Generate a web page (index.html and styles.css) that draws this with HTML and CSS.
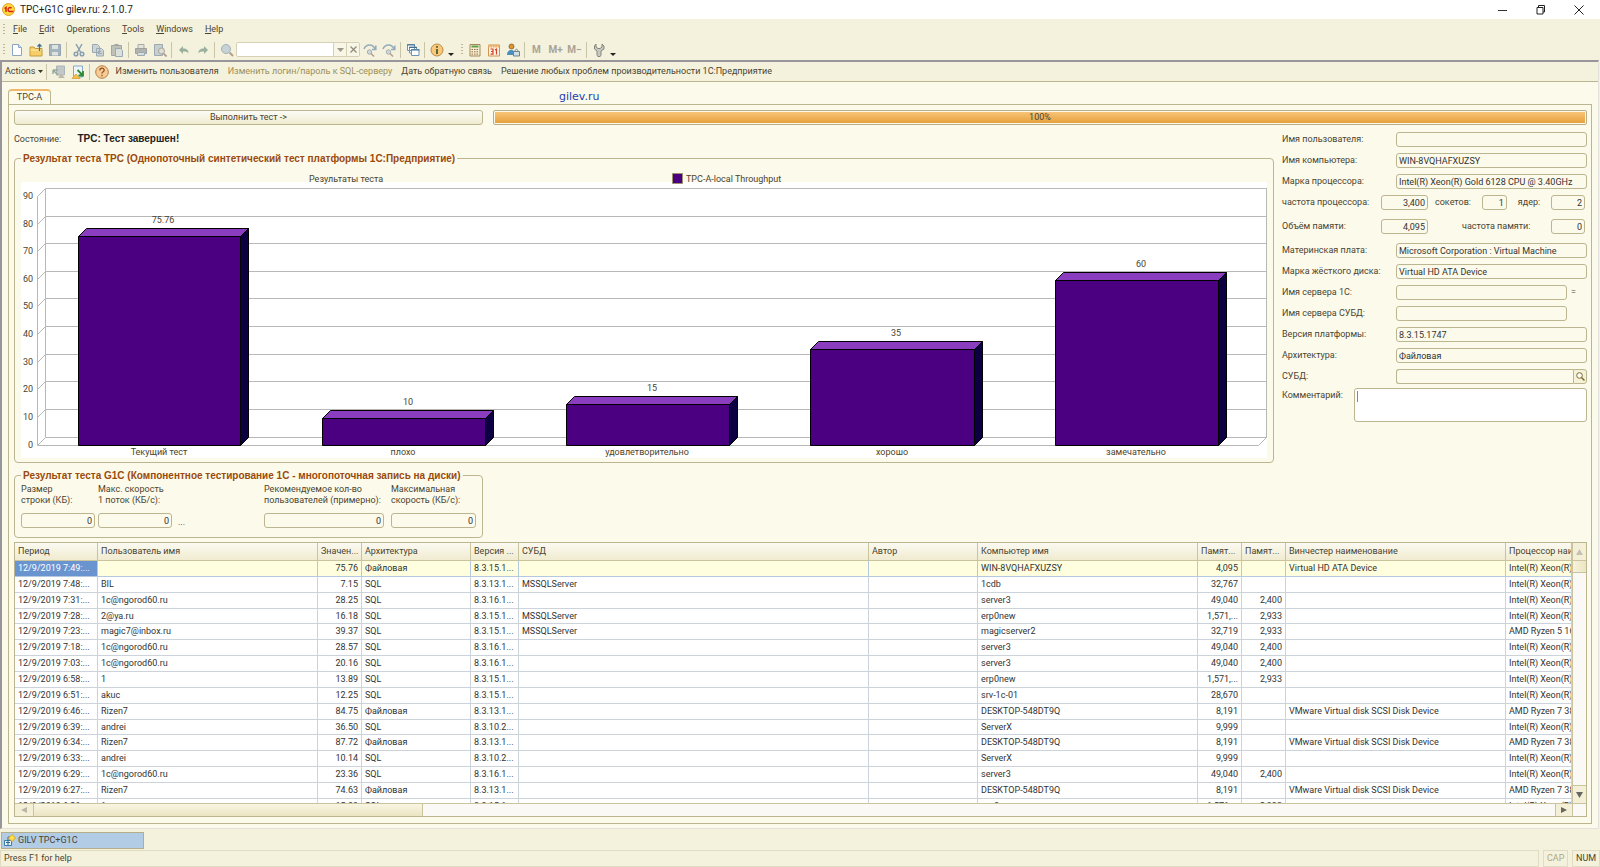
FILE: index.html
```
<!DOCTYPE html>
<html lang="ru">
<head>
    <meta charset="UTF-8">
    <title>TPC+G1C gilev.ru: 2.1.0.7</title>
    <link rel="stylesheet" href="styles.css">
</head>
<body>
    <header class="titlebar">
        <svg class="logo" width="13" height="13" viewBox="0 0 13 13"><circle cx="6.5" cy="6.5" r="6" fill="#ffd83a" stroke="#e0a030"/><path d="M2.5 5.5l1.5-1v4.5M9.5 5.2a2 2 0 1 0-1 3.3h3" fill="none" stroke="#d8201c" stroke-width="1.5"/></svg>
        <h1>TPC+G1C gilev.ru: 2.1.0.7</h1>
        <div class="winbtns">
            <button aria-label="Minimize"><svg width="10" height="10"><path d="M0 5.5h9" stroke="#333"/></svg></button>
            <button aria-label="Restore"><svg width="10" height="10" fill="none" stroke="#222"><path d="M1 2.500h6v6.500h-6zM2.500 2v-1.500h6v6.500h-1.500"/></svg></button>
            <button aria-label="Close"><svg width="10" height="10"><path d="M.5 .5l9 9M9.500 .5l-9 9" stroke="#222"/></svg></button>
        </div>
    </header>

    <nav class="menubar">
        <i class="grip"></i>
        <a href="#"><u>F</u>ile</a>
        <a href="#"><u>E</u>dit</a>
        <a href="#">Operations</a>
        <a href="#"><u>T</u>ools</a>
        <a href="#"><u>W</u>indows</a>
        <a href="#"><u>H</u>elp</a>
    </nav>

    <div class="toolbar">
        <i class="grip"></i>
        <button aria-label="New"><svg viewBox="0 0 14 14"><path d="M2.500 1.500h6l3 3v8h-9z" fill="#fff" stroke="#8aa6c4"/><path d="M8.500 1.500v3h3" fill="#cfe0f0" stroke="#8aa6c4"/></svg></button>
        <button aria-label="Open"><svg viewBox="0 0 14 14"><path d="M1 4h4l1 1.500h7v7.500H1z" fill="#f6cf68" stroke="#c89a3c"/><path d="M1.500 7h11" stroke="#fdeeb0"/><path d="M10.500 8V1.500M8.500 3.500l2-2 2 2" fill="none" stroke="#41708e" stroke-width="1.300"/></svg></button>
        <button aria-label="Save" class="off"><svg viewBox="0 0 14 14"><path d="M1.500 1.500h11v11h-11z" fill="#91a5b8" stroke="#7c90a5"/><path d="M4 2h6v4H4zM4 9h6v3.500H4z" fill="#d9dfdf"/></svg></button>
        <i class="sep"></i>
        <button aria-label="Cut" class="off"><svg viewBox="0 0 14 14" fill="none" stroke="#6f8ba6" stroke-width="1.500"><path d="M4 1l4.500 8M10 1L5.500 9"/><circle cx="4" cy="11" r="1.800"/><circle cx="10" cy="11" r="1.800"/></svg></button>
        <button aria-label="Copy" class="off"><svg viewBox="0 0 14 14" fill="#c3cdd3" stroke="#8499ac"><path d="M1.500 1.500h5l2 2v6h-7zM5.500 5.500h5l2 2v5.500h-7z"/><path d="M7 8.500h3M7 10.500h4"/></svg></button>
        <button aria-label="Paste" class="off"><svg viewBox="0 0 14 14"><path d="M1.500 2.500h10v10h-10z" fill="#b3b6ac" stroke="#8d9599"/><path d="M4.500 1h4v2h-4z" fill="#8d9599"/><path d="M5.500 5.500h5l2 2v6h-7z" fill="#d5dbdc" stroke="#8499ac"/></svg></button>
        <i class="sep"></i>
        <button aria-label="Print" class="off"><svg viewBox="0 0 14 14"><path d="M4 1.500h6v4H4z" fill="#dde0dc" stroke="#999"/><path d="M1.500 5.500h11v5h-11z" fill="#a2a4a4" stroke="#8a8d90"/><path d="M3.500 9.500h7v3h-7z" fill="#cfd9dd" stroke="#8499ac"/></svg></button>
        <button aria-label="Preview" class="off"><svg viewBox="0 0 14 14"><path d="M1.500 1.500h8v11h-8z" fill="#bcc6cb" stroke="#8499ac"/><circle cx="8.500" cy="8" r="3" fill="#d7dad7" stroke="#9a8f88"/><path d="M10.500 10.500l3 3" stroke="#9a7d70" stroke-width="1.600"/></svg></button>
        <i class="sep"></i>
        <button aria-label="Undo" class="off"><svg viewBox="0 0 14 14"><path d="M6 3v2.500c4 0 5.500 1.500 5.500 5C10 8.500 9 8.500 6 8.500V11L2 7z" fill="#82a08e"/></svg></button>
        <button aria-label="Redo" class="off"><svg viewBox="0 0 14 14"><path d="M8 3v2.500c-4 0-5.500 1.500-5.500 5C4 8.500 5 8.500 8 8.500V11l4-4z" fill="#82a08e"/></svg></button>
        <i class="sep"></i>
        <button aria-label="Find" class="off"><svg viewBox="0 0 14 14"><circle cx="6" cy="6" r="4.500" fill="#bccbd6" stroke="#8fa0ae"/><path d="M9.500 9.500l3.500 3.500" stroke="#a8877a" stroke-width="2"/></svg></button>
        <div class="combo">
            <input type="text" aria-label="Search">
            <button aria-label="List"><svg width="7" height="4"><path d="M0 0h7L3.500 4z" fill="#9c9987"/></svg></button>
            <button aria-label="Clear"><svg width="7" height="7"><path d="M.5 .5l6 6M6.500 .5l-6 6" stroke="#8f8c7c" stroke-width="1.300"/></svg></button>
        </div>
        <button aria-label="Find next" class="off"><svg viewBox="0 0 14 14"><path d="M1 6c2-5.500 9-5.500 11 0M12.800 2.500V6.500H9" fill="none" stroke="#7f9bb2" stroke-width="1.500"/><circle cx="6.500" cy="9" r="2.200" fill="#c9d2d5" stroke="#8fa0ae"/><path d="M8 10.500l3 3" stroke="#a8877a" stroke-width="1.400"/></svg></button>
        <button aria-label="Find previous" class="off"><svg viewBox="0 0 14 14"><path d="M1 6c2-5.500 9-5.500 11 0M12.800 2.500V6.500H9" fill="none" stroke="#7f9bb2" stroke-width="1.500"/><circle cx="6.500" cy="9" r="2.200" fill="#c9d2d5" stroke="#8fa0ae"/><path d="M8 10.500l3 3" stroke="#a8877a" stroke-width="1.400"/></svg></button>
        <i class="sep"></i>
        <button aria-label="Windows"><svg viewBox="0 0 14 14" fill="#fff" stroke="#6d93b5"><path d="M1.500 1.500h7v6h-7zM3.500 4h7v6h-7z"/><path d="M5.500 6.500h7.500v6H5.500z"/><path d="M1 2h8M3 4.500h8M5 7h8.500" stroke="#41708e"/></svg></button>
        <i class="sep"></i>
        <button aria-label="Info"><svg viewBox="0 0 14 14"><circle cx="7" cy="7" r="6" fill="#f9c878" stroke="#b98a4a"/><path d="M7 6v5M7 3v1.800" stroke="#4c5c33" stroke-width="1.800"/></svg></button>
        <i class="drop"></i>
        <i class="grip"></i>
        <button aria-label="Calculator"><svg viewBox="0 0 14 14"><path d="M2 1.500h10v11.500H2z" fill="#f7edd0" stroke="#a5875a"/><path d="M3.500 3.500h7" stroke="#5fa04c" stroke-width="2"/><path d="M3.500 6.500h7M3.500 8.800h7M3.500 11.100h7" stroke="#8c6d4b" stroke-dasharray="1.500 1"/></svg></button>
        <button aria-label="Calendar"><svg viewBox="0 0 14 14"><path d="M1.500 2h11v11h-11z" fill="#fdf5e4" stroke="#cf9352"/><path d="M1 3.200h12" stroke="#edaa60" stroke-width="2.500" stroke-dasharray="1.800 .6"/><path d="M3.500 6h2.500v5.200H3.500M4 8.500h2M8 7l1.500-1v5.500" fill="none" stroke="#d8402a" stroke-width="1.200"/></svg></button>
        <button aria-label="User"><svg viewBox="0 0 14 14"><circle cx="5.500" cy="3.500" r="2.500" fill="#d8962c" stroke="#80531b" stroke-width=".7"/><path d="M1 12c0-4 2-5 4.500-5S9 9 9 12z" fill="#4b90bd"/><path d="M7.500 8.500h6v4.500h-6z" fill="#d4dee4" stroke="#6d8293"/><path d="M9 8.500c0-3 3-3 3 0" fill="none" stroke="#6d8293"/></svg></button>
        <i class="sep"></i>
        <button class="mem">M</button>
        <button class="mem">M+</button>
        <button class="mem">M−</button>
        <i class="sep"></i>
        <button aria-label="Settings"><svg viewBox="0 0 14 14"><path d="M4 1v3l2 1.500h2L10 4V1l2 2v3L9 8v4.500c-1 1.500-3 1.500-4 0V8L2.500 6V3z" fill="#c9c9c4" stroke="#85857f"/></svg></button>
        <i class="drop"></i>
    </div>

    <main class="window">
        <div class="actions">
            <button class="text">Actions <svg width="5" height="3"><path d="M0 0h5L2.500 3z" fill="#3b3620"/></svg></button>
            <i class="sep"></i>
            <button aria-label="Back" class="off"><svg viewBox="0 0 14 14"><path d="M4.500 1h8v9h-8z" fill="#b6bdc4" stroke="#9aa7b0"/><path d="M1 5h5M1 5v4M1 5l5 5" stroke="#7f9b8a" stroke-width="1.500"/><path d="M6 13l3-4 4 4z" fill="#b0ab9a"/></svg></button>
            <button aria-label="Load"><svg viewBox="0 0 14 14"><path d="M2.500 1h9v11h-9z" fill="#eef4fa" stroke="#88a8c8"/><path d="M6.500 5l5 5M12 6v4.500H7.500" fill="none" stroke="#2d8a36" stroke-width="1.800"/><path d="M1 13.500l4-4.500 4 4.500z" fill="#f5c33f" stroke="#d6952a" stroke-width=".7"/></svg></button>
            <i class="sep"></i>
            <button aria-label="Help"><svg viewBox="0 0 14 14"><circle cx="7" cy="7" r="6.300" fill="#f9cb95" stroke="#b57d45"/><path d="M4.800 5.500c0-3 4.400-3 4.400-.3 0 1.600-2.200 1.600-2.200 3.300M7 9.800v1.500" fill="none" stroke="#8a5524" stroke-width="1.300"/></svg></button>
            <button class="text">Изменить пользователя</button>
            <button class="text" disabled>Изменить логин/пароль к SQL-серверу</button>
            <button class="text">Дать обратную связь</button>
            <button class="text">Решение любых проблем производительности 1С:Предприятие</button>
        </div>

        <div class="tabs">
            <button class="tab">TPC-A</button>
            <a class="site" href="#">gilev.ru</a>
        </div>

        <div class="panel">
            <div class="run">
                <button class="push">Выполнить тест -&gt;</button>
                <div class="progress" role="progressbar" aria-valuenow="100"><span>100%</span></div>
            </div>

            <div class="middle">
                <div class="left">
                    <p class="state">Состояние: <b>TPC: Тест завершен!</b></p>
                    <fieldset class="tpc">
                        <legend>Результат теста TPC (Однопоточный синтетический тест платформы 1С:Предприятие)</legend>
                        <svg class="chart" viewBox="0 0 1246 288">
                            <path d="M0 12h1246v276H0z" fill="#fff"/>
                            <text x="288" y="12">Результаты теста</text>
                            <path d="M651.500 3.500h10v10h-10z" fill="#4b0082" stroke="#9c9372"/>
                            <text x="665" y="12">TPC-A-local Throughput</text>
                            <!-- back wall -->
                            <path class="wall" d="M24.500 18.500H1246M24.500 46.500H1246M24.500 73.500H1246M24.500 101.500H1246M24.500 128.500H1246M24.500 156.500H1246M24.500 184.500H1246M24.500 211.500H1246M24.500 239.500H1246M24.500 267.500H1246M24.500 18.500V267.500M1245.500 18.500V267.500"/>
                            <!-- axis -->
                            <path class="wall" d="M16.500 26.500V275.500H1237.500L1245.500 267.500M16.500 26.500l8-8M16.500 54.500l8-8M16.500 81.500l8-8M16.500 109.500l8-8M16.500 136.500l8-8M16.500 164.500l8-8M16.500 192.500l8-8M16.500 219.500l8-8M16.500 247.500l8-8M16.500 275.500l8-8"/>
                            <g text-anchor="end">
                                <text x="12" y="29">90</text>
                                <text x="12" y="57">80</text>
                                <text x="12" y="84">70</text>
                                <text x="12" y="112">60</text>
                                <text x="12" y="139">50</text>
                                <text x="12" y="167">40</text>
                                <text x="12" y="195">30</text>
                                <text x="12" y="222">20</text>
                                <text x="12" y="250">10</text>
                                <text x="12" y="278">0</text>
                            </g>
                            <!-- bars: front, top, side -->
                            <g stroke="#000" stroke-linejoin="round">
                                <g fill="#4b0082"><path d="M57.500 66.500h162v209h-162z"/><path d="M301.500 248.500h163v27h-163z"/><path d="M545.500 234.500h163v41h-163z"/><path d="M789.500 179.500h164v96h-164z"/><path d="M1034.500 110.500h163v165h-163z"/></g>
                                <g fill="#8b3dbf"><path d="M57.500 66.500l8-8h162l-8 8z"/><path d="M301.500 248.500l8-8h163l-8 8z"/><path d="M545.500 234.500l8-8h163l-8 8z"/><path d="M789.500 179.500l8-8h164l-8 8z"/><path d="M1034.500 110.500l8-8h163l-8 8z"/></g>
                                <g fill="#0d0042"><path d="M219.500 66.500l8-8v209l-8 8z"/><path d="M464.500 248.500l8-8v27l-8 8z"/><path d="M708.500 234.500l8-8v41l-8 8z"/><path d="M953.500 179.500l8-8v96l-8 8z"/><path d="M1197.500 110.500l8-8v165l-8 8z"/></g>
                            </g>
                            <g text-anchor="middle">
                                <text x="142" y="53">75.76</text>
                                <text x="387" y="235">10</text>
                                <text x="631" y="221">15</text>
                                <text x="875" y="166">35</text>
                                <text x="1120" y="97">60</text>
                                <text x="138" y="285">Текущий тест</text>
                                <text x="382" y="285">плохо</text>
                                <text x="626" y="285">удовлетворительно</text>
                                <text x="871" y="285">хорошо</text>
                                <text x="1115" y="285">замечательно</text>
                            </g>
                        </svg>
                    </fieldset>
                </div>

                <form class="props">
                    <div class="row"><label for="user">Имя пользователя:</label><input id="user" readonly></div>
                    <div class="row"><label for="comp">Имя компьютера:</label><input id="comp" value="WIN-8VQHAFXUZSY" readonly></div>
                    <div class="row"><label for="cpu">Марка процессора:</label><input id="cpu" value="Intel(R) Xeon(R) Gold 6128 CPU @ 3.40GHz" readonly></div>
                    <div class="row nums"><label for="freq">частота процессора:</label><input id="freq" value="3,400" readonly><label for="sock">сокетов:</label><input id="sock" class="tiny" value="1" readonly><label for="core">ядер:</label><input id="core" class="small" value="2" readonly></div>
                    <div class="row nums apart"><label for="mem">Объём памяти:</label><input id="mem" value="4,095" readonly><label for="memfreq" class="far">частота памяти:</label><input id="memfreq" class="small" value="0" readonly></div>
                    <div class="row"><label for="board">Материнская плата:</label><input id="board" value="Microsoft Corporation : Virtual Machine" readonly></div>
                    <div class="row"><label for="disk">Марка жёсткого диска:</label><input id="disk" value="Virtual HD ATA Device" readonly></div>
                    <div class="row"><label for="srv1c">Имя сервера 1С:</label><input id="srv1c" readonly><span class="after">=</span></div>
                    <div class="row"><label for="srvdb">Имя сервера СУБД:</label><input id="srvdb" readonly><span class="after"></span></div>
                    <div class="row"><label for="ver">Версия платформы:</label><input id="ver" value="8.3.15.1747" readonly></div>
                    <div class="row"><label for="arch">Архитектура:</label><input id="arch" value="Файловая" readonly></div>
                    <div class="row pick"><label for="db">СУБД:</label><input id="db" readonly><button type="button" aria-label="Выбрать"><svg width="9" height="9"><circle cx="3.500" cy="3.500" r="2.800" fill="#fff" stroke="#7b6a2c"/><path d="M5.500 5.500l3 3" stroke="#7b6a2c" stroke-width="1.500"/></svg></button></div>
                    <div class="row note"><label for="note">Комментарий:</label><textarea id="note"></textarea></div>
                </form>
            </div>

            <fieldset class="g1c">
                <legend>Результат теста G1C (Компонентное тестирование 1С - многопоточная запись на диски)</legend>
                <div class="size"><label for="size">Размер<br>строки (КБ):</label><input id="size" value="0" readonly></div>
                <div class="thread"><label for="thread">Макс. скорость<br>1 поток (КБ/с):</label><input id="thread" value="0" readonly></div>
                <span class="dots">...</span>
                <div class="count"><label for="count">Рекомендуемое кол-во<br>пользователей (примерно):</label><input id="count" value="0" readonly></div>
                <div class="speed"><label for="speed">Максимальная<br>скорость (КБ/с):</label><input id="speed" value="0" readonly></div>
            </fieldset>

            <div class="list">
                <div class="view">
                    <table>
                        <colgroup><col class="w83"><col class="w220"><col class="w44"><col class="w109"><col class="w48"><col class="w350"><col class="w109"><col class="w220"><col class="w44"><col class="w44"><col class="w220"><col></colgroup>
                        <thead>
                            <tr><th>Период</th><th>Пользователь имя</th><th>Значен...</th><th>Архитектура</th><th>Версия ...</th><th>СУБД</th><th>Автор</th><th>Компьютер имя</th><th>Памят...</th><th>Памят...</th><th>Винчестер наименование</th><th>Процессор наименование</th></tr>
                        </thead>
                        <tbody>
                            <tr class="current"><td>12/9/2019 7:49:...</td><td></td><td>75.76</td><td>Файловая</td><td>8.3.15.1...</td><td></td><td></td><td>WIN-8VQHAFXUZSY</td><td>4,095</td><td></td><td>Virtual HD ATA Device</td><td>Intel(R) Xeon(R)</td></tr>
                            <tr><td>12/9/2019 7:48:...</td><td>BIL</td><td>7.15</td><td>SQL</td><td>8.3.13.1...</td><td>MSSQLServer</td><td></td><td>1cdb</td><td>32,767</td><td></td><td></td><td>Intel(R) Xeon(R)</td></tr>
                            <tr><td>12/9/2019 7:31:...</td><td>1c@ngorod60.ru</td><td>28.25</td><td>SQL</td><td>8.3.16.1...</td><td></td><td></td><td>server3</td><td>49,040</td><td>2,400</td><td></td><td>Intel(R) Xeon(R)</td></tr>
                            <tr><td>12/9/2019 7:28:...</td><td>2@ya.ru</td><td>16.18</td><td>SQL</td><td>8.3.15.1...</td><td>MSSQLServer</td><td></td><td>erp0new</td><td>1,571,...</td><td>2,933</td><td></td><td>Intel(R) Xeon(R)</td></tr>
                            <tr><td>12/9/2019 7:23:...</td><td>magic7@inbox.ru</td><td>39.37</td><td>SQL</td><td>8.3.15.1...</td><td>MSSQLServer</td><td></td><td>magicserver2</td><td>32,719</td><td>2,933</td><td></td><td>AMD Ryzen 5 1600</td></tr>
                            <tr><td>12/9/2019 7:18:...</td><td>1c@ngorod60.ru</td><td>28.57</td><td>SQL</td><td>8.3.16.1...</td><td></td><td></td><td>server3</td><td>49,040</td><td>2,400</td><td></td><td>Intel(R) Xeon(R)</td></tr>
                            <tr><td>12/9/2019 7:03:...</td><td>1c@ngorod60.ru</td><td>20.16</td><td>SQL</td><td>8.3.16.1...</td><td></td><td></td><td>server3</td><td>49,040</td><td>2,400</td><td></td><td>Intel(R) Xeon(R)</td></tr>
                            <tr><td>12/9/2019 6:58:...</td><td>1</td><td>13.89</td><td>SQL</td><td>8.3.15.1...</td><td></td><td></td><td>erp0new</td><td>1,571,...</td><td>2,933</td><td></td><td>Intel(R) Xeon(R)</td></tr>
                            <tr><td>12/9/2019 6:51:...</td><td>akuc</td><td>12.25</td><td>SQL</td><td>8.3.15.1...</td><td></td><td></td><td>srv-1c-01</td><td>28,670</td><td></td><td></td><td>Intel(R) Xeon(R)</td></tr>
                            <tr><td>12/9/2019 6:46:...</td><td>Rizen7</td><td>84.75</td><td>Файловая</td><td>8.3.13.1...</td><td></td><td></td><td>DESKTOP-548DT9Q</td><td>8,191</td><td></td><td>VMware Virtual disk SCSI Disk Device</td><td>AMD Ryzen 7 3800</td></tr>
                            <tr><td>12/9/2019 6:39:...</td><td>andrei</td><td>36.50</td><td>SQL</td><td>8.3.10.2...</td><td></td><td></td><td>ServerX</td><td>9,999</td><td></td><td></td><td>Intel(R) Xeon(R)</td></tr>
                            <tr><td>12/9/2019 6:34:...</td><td>Rizen7</td><td>87.72</td><td>Файловая</td><td>8.3.13.1...</td><td></td><td></td><td>DESKTOP-548DT9Q</td><td>8,191</td><td></td><td>VMware Virtual disk SCSI Disk Device</td><td>AMD Ryzen 7 3800</td></tr>
                            <tr><td>12/9/2019 6:33:...</td><td>andrei</td><td>10.14</td><td>SQL</td><td>8.3.10.2...</td><td></td><td></td><td>ServerX</td><td>9,999</td><td></td><td></td><td>Intel(R) Xeon(R)</td></tr>
                            <tr><td>12/9/2019 6:29:...</td><td>1c@ngorod60.ru</td><td>23.36</td><td>SQL</td><td>8.3.16.1...</td><td></td><td></td><td>server3</td><td>49,040</td><td>2,400</td><td></td><td>Intel(R) Xeon(R)</td></tr>
                            <tr><td>12/9/2019 6:27:...</td><td>Rizen7</td><td>74.63</td><td>Файловая</td><td>8.3.13.1...</td><td></td><td></td><td>DESKTOP-548DT9Q</td><td>8,191</td><td></td><td>VMware Virtual disk SCSI Disk Device</td><td>AMD Ryzen 7 3800</td></tr>
                            <tr><td>12/9/2019 6:26:...</td><td>1</td><td>15.89</td><td>SQL</td><td>8.3.15.1...</td><td></td><td></td><td>erp0new</td><td>1,571,...</td><td>2,933</td><td></td><td>Intel(R) Xeon(R)</td></tr>
                        </tbody>
                    </table>
                </div>
                <div class="vscroll">
                    <button class="up" aria-label="Up"><svg width="7" height="6"><path d="M0 6h7L3.500 0z" fill="#c4c1b2"/></svg></button>
                    <i class="thumb"></i>
                    <button class="down" aria-label="Down"><svg width="7" height="6"><path d="M0 0h7L3.500 6z" fill="#67665f"/></svg></button>
                </div>
                <div class="hscroll">
                    <button class="prev" aria-label="Left"><svg width="6" height="6"><path d="M6 0v6L0 3z" fill="#b9b6a8"/></svg></button>
                    <i class="thumb"></i>
                    <button class="next" aria-label="Right"><svg width="6" height="6"><path d="M0 0v6l6-3z" fill="#67665f"/></svg></button>
                </div>
            </div>
        </div>
    </main>

    <div class="taskbar">
        <button><svg width="13" height="13" viewBox="0 0 13 13"><path d="M1.500 6.500h7v5h-7z" fill="#e4f1fa" stroke="#3d7ea8"/><path d="M5 11V3h3M3 8.500h4" fill="none" stroke="#32688c"/><path d="M9 .5L12.500 4 9 7.500 5.500 4z" fill="#ffdf4a" stroke="#d6a52a"/></svg>GILV TPC+G1C</button>
    </div>

    <footer class="statusbar">
        <span class="hint">Press F1 for help</span>
        <span class="cap">CAP</span>
        <span class="num">NUM</span>
    </footer>
</body>
</html>
```
FILE: styles.css
```
*{
    box-sizing: border-box;
}
body{
    margin: 0;
    height: 100vh;
    display: flex;
    flex-direction: column;
    background: #f4f2dd;
    color: #4a4430;
    font: 9px/15px Roboto, sans-serif;
}
button,input,textarea{
    margin: 0;
    padding: 0;
    border: 0;
    background: none;
    color: inherit;
    font: inherit;
}
i{
    flex: none;
}
svg{
    flex: none;
    display: block;
}

/* title */
.titlebar{
    height: 19px;
    display: flex;
    align-items: center;
    padding-left: 2px;
    background: #fff;
    color: #222;
}
.titlebar h1{
    flex: 1;
    margin: 0 0 0 5px;
    font: 10px/19px Roboto, sans-serif;
}
.winbtns{
    display: flex;
    padding-right: 2px;
}
.winbtns button{
    width: 38px;
    height: 17px;
    padding-left: 14px;
}

/* menu */
.menubar{
    height: 20px;
    display: flex;
    align-items: center;
    padding-left: 3px;
}
.menubar a{
    margin-right: 12px;
    color: inherit;
    text-decoration: none;
}
.grip{
    width: 2px;
    height: 11px;
    margin-right: 8px;
    background: repeating-linear-gradient(#bdb89b 0 1px,transparent 1px 3px);
}
.sep{
    width: 1px;
    height: 16px;
    margin: 0 2px;
    background: #c9c5a9;
}

/* toolbar */
.toolbar{
    height: 21px;
    display: flex;
    align-items: center;
    padding-left: 3px;
}
.toolbar .grip{
    margin-right: 2px;
}
.toolbar .drop + .grip{
    margin: 0 2px 0 5px;
}
.toolbar > button,.actions > button{
    flex: none;
    width: 19px;
    height: 19px;
    display: flex;
    align-items: center;
    justify-content: center;
}
.toolbar > button svg,.actions > button:not(.text) svg{
    width: 14px;
    height: 14px;
}
.off{
    opacity: .8;
}
.toolbar .mem{
    color: #aaa395;
    font-size: 10px;
    font-weight: bold;
}
.drop{
    align-self: flex-end;
    margin: 0 2px 4px 2px;
    border: 3px solid transparent;
    border-top-color: #222;
    border-bottom: 0;
}
.combo{
    width: 124px;
    height: 15px;
    display: flex;
    border: 1px solid #d6d1b4;
    border-radius: 2px;
    background: #fff;
}
.combo input{
    flex: 1;
    min-width: 0;
}
.combo button{
    width: 13px;
    display: flex;
    align-items: center;
    justify-content: center;
    border-left: 1px solid #d6d1b4;
    background: #f8f6e6;
}

/* inner window */
.window{
    flex: 1;
    min-height: 0;
    display: flex;
    flex-direction: column;
    margin-right: 1px;
    border: solid #98969a;
    border-width: 2px 0 0 2px;
    border-right: 1px solid #e4e2dc;
    border-bottom: 1px solid #e4e2dc;
    background: #fcfaeb;
}
.actions{
    height: 20px;
    display: flex;
    align-items: center;
    border-bottom: 1px solid #bbb68f;
    background: #f4f2dd;
}
.actions > .text{
    width: auto;
    gap: 3px;
    margin: 0 5px 0 4px;
    white-space: nowrap;
}
.actions > .text:first-child{
    margin: 0 1px 0 3px;
}
.actions > .text:disabled{
    color: #a08f55;
}
.tabs{
    height: 22px;
    display: flex;
    align-items: flex-end;
    padding-left: 6px;
}
.tab{
    width: 43px;
    height: 15px;
    border: 1px solid #bbb68f;
    border-bottom: 0;
    border-top: 2px solid #f0b96a;
    border-radius: 4px 4px 0 0;
    line-height: 13px;
}
.site{
    margin-left: 508px;
    color: #1f3fb0;
    font-family: "DejaVu Sans", sans-serif;
    font-size: 11px;
    text-decoration: none;
}
.panel{
    flex: 1;
    min-height: 0;
    display: flex;
    flex-direction: column;
    margin: 0 6px 4px 6px;
    padding: 5px 4px 6px 5px;
    border: 1px solid #bbb68f;
}

.run{
    display: flex;
    gap: 10px;
}
.push{
    width: 469px;
    height: 15px;
    border: 1px solid #bbb68f;
    border-radius: 3px;
    background: linear-gradient(#fdfcf6,#efebd0);
    line-height: 13px;
}
.progress{
    flex: 1;
    height: 15px;
    padding: 1px;
    border: 1px solid #b5ae88;
    border-radius: 2px;
    text-align: center;
}
.progress span{
    display: block;
    background: linear-gradient(#f8c478,#e6a03c);
    line-height: 11px;
}

.middle{
    display: flex;
    align-items: flex-start;
    gap: 8px;
}
.left{
    flex: 1;
    min-width: 0;
}
.state{
    margin: 6px 0 5px;
}
.state b{
    margin-left: 14px;
    color: #222;
}
fieldset{
    min-width: 0;
    margin: 0;
    border: 1px solid #bbb68f;
    border-radius: 4px;
}
legend{
    padding: 0 2px;
    color: #9a4a0c;
    line-height: 13px;
    white-space: nowrap;
}
legend,.state b{
    font-family: "Liberation Sans", sans-serif;
    font-size: 10px;
    font-weight: bold;
}
.tpc{
    padding: 5px 6px 4px;
}
.chart{
    width: 100%;
    font-size: 9px;
    fill: #4a4430;
}
.chart .wall{
    fill: none;
    stroke: #b8b8b8;
}

/* properties */
.props{
    width: 305px;
    padding-top: 7px;
}
.row{
    height: 15px;
    display: flex;
    align-items: center;
    margin-bottom: 6px;
}
.row label{
    width: 114px;
    white-space: nowrap;
}
.row input,.g1c input{
    flex: 1;
    min-width: 0;
    height: 15px;
    padding: 0 2px;
    border: 1px solid #bbb68f;
    border-radius: 3px;
    color: #333;
    line-height: 13px;
}
.nums label{
    width: auto;
}
.nums label:first-child{
    width: 99px;
}
.nums input{
    flex: none;
    width: 47px;
    margin-right: 7px;
    text-align: right;
}
.nums .tiny{
    width: 25px;
    margin: 0 11px 0 auto;
}
.nums .small{
    width: 34px;
    margin: 0 2px 0 auto;
}
.nums .far{
    margin-left: 27px;
}
.apart{
    margin: 9px 0;
}
.after{
    width: 20px;
    padding-left: 4px;
}
.pick{
    margin-bottom: 4px;
}
.pick input{
    border-right: 0;
    border-radius: 3px 0 0 3px;
}
.pick button{
    width: 14px;
    height: 15px;
    padding-left: 2px;
    border: 1px solid #bbb68f;
    border-radius: 0 3px 3px 0;
    background: #f6f2d8;
}
.note{
    height: 34px;
    align-items: flex-start;
    margin: 0;
}
.note label{
    width: 72px;
}
.note textarea{
    flex: 1;
    min-width: 0;
    height: 34px;
    border: 1px solid #bbb68f;
    border-radius: 3px;
    background: linear-gradient(#888,#888) 2px 2px / 1px 11px no-repeat #fff;
    resize: none;
}

/* g1c */
.g1c{
    width: 469px;
    height: 69px;
    display: flex;
    margin-top: 6px;
    padding: 2px 6px 0;
}
.g1c label{
    display: block;
    height: 29px;
    line-height: 11px;
    white-space: nowrap;
}
.g1c input{
    width: 100%;
    text-align: right;
}
.size,.thread{
    width: 74px;
    margin-right: 3px;
}
.dots{
    width: 89px;
    padding: 31px 0 0 3px;
}
.count{
    width: 120px;
    margin-right: 7px;
}
.speed{
    width: 85px;
}

/* list */
.list{
    flex: 1;
    min-height: 0;
    display: grid;
    grid-template: minmax(0,1fr) 13px / minmax(0,1fr) 14px;
    margin-top: 4px;
    border: 1px solid #bbb68f;
    background: #fff;
}
.view{
    overflow: hidden;
}
table{
    width: 100%;
    table-layout: fixed;
    border-collapse: separate;
    border-spacing: 0;
}
.w44{ width: 44px; }
.w48{ width: 48px; }
.w83{ width: 83px; }
.w109{ width: 109px; }
.w220{ width: 220px; }
.w350{ width: 350px; }
th,td{
    overflow: hidden;
    padding: 0 3px;
    border: solid #ccd3da;
    border-width: 0 1px 1px 0;
    text-align: left;
    white-space: nowrap;
}
th{
    height: 18px;
    border-color: #c9c39e;
    background: linear-gradient(#fbfaf1,#f0ebd0);
    font-weight: normal;
}
td{
    height: 16px;
    color: #333;
}
tr:nth-child(7n+4) td{
    height: 15px;
    line-height: 14px;
}
td:nth-child(3),td:nth-child(9),td:nth-child(10){
    text-align: right;
}
.current td{
    background: #ffffe0;
    border-color: #b4c8e0;
}
.current td:first-child{
    background: #6a94cf;
    color: #fff;
}
.vscroll,.hscroll{
    display: flex;
    background: #faf9f5;
}
.vscroll{
    flex-direction: column;
    border-left: 1px solid #c9c39e;
}
.vscroll button,.hscroll button{
    flex: none;
    display: flex;
    align-items: center;
    justify-content: center;
    background: #f4f0d8;
}
.up{
    height: 17px;
}
.vscroll .thumb{
    height: 13px;
    border: solid #c9c39e;
    border-width: 1px 0;
    background: linear-gradient(90deg,#f7f3da,#ece5c3);
}
.vscroll .down{
    height: 18px;
    margin-top: auto;
    border-top: 1px solid #c9c39e;
}
.hscroll{
    grid-column: 1 / 3;
    padding-right: 13px;
    border-top: 1px solid #c9c39e;
}
.prev,.next{
    width: 18px;
}
.hscroll .thumb{
    width: 25%;
    border: solid #c9c39e;
    border-width: 0 1px;
    background: linear-gradient(#f8f5e2,#ece5c3);
}
.hscroll .next{
    margin-left: auto;
    border: solid #c9c39e;
    border-width: 0 1px;
}

/* bottom */
.taskbar{
    padding: 3px 1px 1px;
}
.taskbar button{
    width: 143px;
    height: 17px;
    display: flex;
    align-items: center;
    gap: 2px;
    padding-left: 1px;
    border: 1px solid #b5ae88;
    background: #b2cce6;
}
.statusbar{
    height: 17px;
    display: flex;
    gap: 4px;
}
.statusbar span{
    padding: 0 3px;
    border: 1px solid #e0dcc2;
}
.statusbar .hint{
    flex: 1;
}
.statusbar .cap{
    width: 25px;
    color: #b0a67c;
}
.statusbar .num{
    width: 28px;
}
```
